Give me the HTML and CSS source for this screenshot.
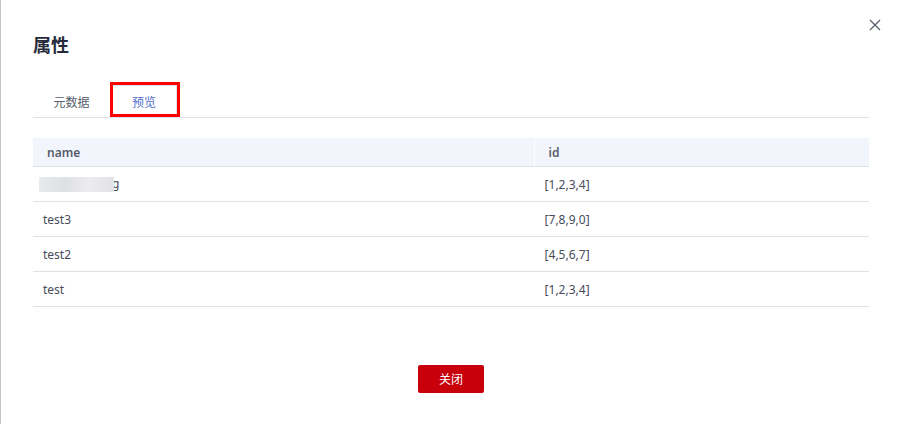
FILE: index.html
```html
<!DOCTYPE html>
<html lang="zh-CN">
<head>
<meta charset="utf-8">
<title>属性</title>
<link rel="stylesheet" href="styles.css">
</head>
<body>
<main class="dialog" role="dialog" aria-labelledby="dialog-title">
  <button class="close-icon" type="button" aria-label="关闭">
    <svg width="12" height="12" viewBox="0 0 12 12" aria-hidden="true"><path d="M1 1 11 11M11 1 1 11"/></svg>
  </button>
  <h1 class="title" id="dialog-title">属性</h1>
  <nav class="tabs" role="tablist">
    <button class="tab" type="button" role="tab" aria-selected="false">元数据</button>
    <button class="tab tab-active" type="button" role="tab" aria-selected="true">预览</button>
  </nav>
  <table class="preview">
    <thead>
      <tr><th scope="col">name</th><th scope="col">id</th></tr>
    </thead>
    <tbody>
      <tr><td class="masked"><span class="mask"></span>g</td><td>[1,2,3,4]</td></tr>
      <tr><td>test3</td><td>[7,8,9,0]</td></tr>
      <tr><td>test2</td><td>[4,5,6,7]</td></tr>
      <tr><td>test</td><td>[1,2,3,4]</td></tr>
    </tbody>
  </table>
  <footer class="actions">
    <button class="primary" type="button">关闭</button>
  </footer>
</main>
</body>
</html>
```
FILE: styles.css
```css
* {
  box-sizing: border-box;
}

body {
  margin: 0;
  background: #fff;
  color: #464c59;
  font: 12px/18px "Noto Sans", "Noto Sans CJK SC", sans-serif;
}

button {
  font: inherit;
  color: inherit;
  border: 0;
  padding: 0;
  background: none;
  cursor: pointer;
}

.dialog {
  position: relative;
  min-height: 100vh;
  padding: 32px 32px 31px;
  border-left: 1px solid #c3c3c7;
}

.close-icon {
  position: absolute;
  top: 19px;
  right: 20px;
  display: flex;
}

.close-icon svg {
  fill: none;
  stroke: #575d6c;
  stroke-width: 1.3;
}

.title {
  margin: 0;
  color: #252b3a;
  font-family: "Noto Sans CJK SC", sans-serif;
  font-size: 18px;
  line-height: 24px;
  font-weight: 700;
}

.tabs {
  display: flex;
  margin-top: 26px;
  border-bottom: 1px solid #dfe1e6;
  color: #575d6c;
  font-family: "Noto Sans CJK SC", sans-serif;
}

.tab {
  width: 77px;
  height: 35px;
  padding-top: 4px;
}

.tab-active {
  width: 70px;
  padding-right: 2px;
  border: 3px solid #f00;
  box-shadow: inset 0 1px #dfe1e6, inset -1px 0 #dfe1e6;
  color: #526ecc;
}

.preview {
  width: 100%;
  margin-top: 20px;
  border-collapse: separate;
  border-spacing: 0;
  table-layout: fixed;
}

.preview th,
.preview td {
  padding: 2px 10px 0;
  border-bottom: 1px solid #dfe1e6;
  text-align: left;
}

.preview th {
  height: 29px;
  padding: 2px 14px 0;
  background: #f2f5fc;
  color: #575d6c;
  font-weight: 600;
}

.preview th:first-child {
  width: 60%;
  border-right: 1px solid #fff;
}

.preview td {
  height: 35px;
}

.preview .masked {
  padding-top: 0;
  padding-left: 6px;
}

.mask {
  position: relative;
  display: inline-block;
  width: 75px;
  height: 15px;
  margin-right: -2px;
  vertical-align: middle;
  background: linear-gradient(100deg, #e9eaeb, #dfe0e2 35%, #ececee 65%, #e1e2e4);
}

.actions {
  display: flex;
  justify-content: center;
  margin-top: 58px;
}

.primary {
  width: 66px;
  height: 28px;
  border-radius: 2px;
  background: #c7000b;
  color: #fff;
  font-family: "Noto Sans CJK SC", sans-serif;
}
```
